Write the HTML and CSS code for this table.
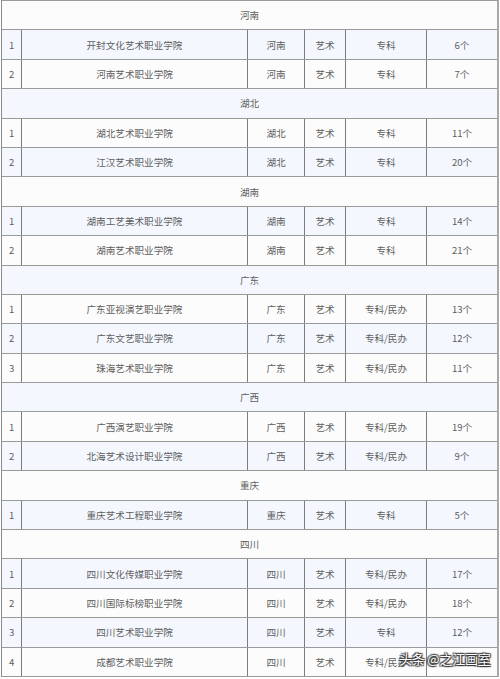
FILE: index.html
```html
<!DOCTYPE html>
<html lang="zh">
<head>
<meta charset="utf-8">
<title>艺术职业学院</title>
<link rel="stylesheet" href="styles.css">
</head>
<body>
<div class="tbl">
  <div class="row head w"><div class="hc">河南</div></div>
  <div class="row b"><div class="c n">1</div><div class="c">开封文化艺术职业学院</div><div class="c">河南</div><div class="c">艺术</div><div class="c">专科</div><div class="c last">6个</div></div>
  <div class="row w"><div class="c n">2</div><div class="c">河南艺术职业学院</div><div class="c">河南</div><div class="c">艺术</div><div class="c">专科</div><div class="c last">7个</div></div>

  <div class="row head b"><div class="hc">湖北</div></div>
  <div class="row w"><div class="c n">1</div><div class="c">湖北艺术职业学院</div><div class="c">湖北</div><div class="c">艺术</div><div class="c">专科</div><div class="c last">11个</div></div>
  <div class="row b"><div class="c n">2</div><div class="c">江汉艺术职业学院</div><div class="c">湖北</div><div class="c">艺术</div><div class="c">专科</div><div class="c last">20个</div></div>

  <div class="row head w"><div class="hc">湖南</div></div>
  <div class="row b"><div class="c n">1</div><div class="c">湖南工艺美术职业学院</div><div class="c">湖南</div><div class="c">艺术</div><div class="c">专科</div><div class="c last">14个</div></div>
  <div class="row w"><div class="c n">2</div><div class="c">湖南艺术职业学院</div><div class="c">湖南</div><div class="c">艺术</div><div class="c">专科</div><div class="c last">21个</div></div>

  <div class="row head b"><div class="hc">广东</div></div>
  <div class="row w"><div class="c n">1</div><div class="c">广东亚视演艺职业学院</div><div class="c">广东</div><div class="c">艺术</div><div class="c">专科/民办</div><div class="c last">13个</div></div>
  <div class="row b"><div class="c n">2</div><div class="c">广东文艺职业学院</div><div class="c">广东</div><div class="c">艺术</div><div class="c">专科/民办</div><div class="c last">12个</div></div>
  <div class="row w"><div class="c n">3</div><div class="c">珠海艺术职业学院</div><div class="c">广东</div><div class="c">艺术</div><div class="c">专科/民办</div><div class="c last">11个</div></div>

  <div class="row head b"><div class="hc">广西</div></div>
  <div class="row w"><div class="c n">1</div><div class="c">广西演艺职业学院</div><div class="c">广西</div><div class="c">艺术</div><div class="c">专科/民办</div><div class="c last">19个</div></div>
  <div class="row b"><div class="c n">2</div><div class="c">北海艺术设计职业学院</div><div class="c">广西</div><div class="c">艺术</div><div class="c">专科/民办</div><div class="c last">9个</div></div>

  <div class="row head w"><div class="hc">重庆</div></div>
  <div class="row b"><div class="c n">1</div><div class="c">重庆艺术工程职业学院</div><div class="c">重庆</div><div class="c">艺术</div><div class="c">专科</div><div class="c last">5个</div></div>

  <div class="row head w"><div class="hc">四川</div></div>
  <div class="row b"><div class="c n">1</div><div class="c">四川文化传媒职业学院</div><div class="c">四川</div><div class="c">艺术</div><div class="c">专科/民办</div><div class="c last">17个</div></div>
  <div class="row w"><div class="c n">2</div><div class="c">四川国际标榜职业学院</div><div class="c">四川</div><div class="c">艺术</div><div class="c">专科/民办</div><div class="c last">18个</div></div>
  <div class="row b"><div class="c n">3</div><div class="c">四川艺术职业学院</div><div class="c">四川</div><div class="c">艺术</div><div class="c">专科</div><div class="c last">12个</div></div>
  <div class="row w"><div class="c n">4</div><div class="c">成都艺术职业学院</div><div class="c">四川</div><div class="c">艺术</div><div class="c">专科/民办</div><div class="c last"></div></div>
</div>
<div class="mark">头条 @之江画室</div>
</body>
</html>
```

FILE: styles.css
```css
html, body {
  margin: 0;
  padding: 0;
  background: #ffffff;
}
body {
  width: 500px;
  height: 679px;
  overflow: hidden;
  position: relative;
  font-family: "Noto Sans CJK SC", "Noto Sans", sans-serif;
  font-size: 9.6px;
  color: #5e5e5e;
}
.tbl {
  margin-left: 1px;
  width: 498px;
  box-sizing: border-box;
  border-top: 1px solid #9a9a9a;
  border-left: 1px solid #8a8a8a;
  border-right: 2px solid #a8a8a8;
}
.row {
  display: grid;
  grid-template-columns: 20px 226px 57px 41px 81px 1fr;
  height: 29.4px;
  box-sizing: border-box;
  border-bottom: 1px solid #9a9a9a;
}
.row.w { background: #fcfcfc; }
.row.b { background: #f4f8fe; }
.row.head { grid-template-columns: 1fr; }
.hc {
  display: flex;
  align-items: center;
  justify-content: center;
}
.c {
  display: flex;
  align-items: center;
  justify-content: center;
  border-right: 1px solid #7c7c7c;
  white-space: nowrap;
}
.c.n {
  justify-content: flex-start;
  padding-left: 7px;
}
.c.last { border-right: none; }
.mark {
  position: absolute;
  left: 399px;
  top: 650px;
  font-size: 13px;
  line-height: 18px;
  white-space: nowrap;
  color: #ffffff;
  letter-spacing: -0.2px;
  text-shadow: 0 0 1px #333, 1px 1px 1px #333, -1px -1px 1px #444, 1px -1px 1px #444, -1px 1px 1px #444;
}
```
